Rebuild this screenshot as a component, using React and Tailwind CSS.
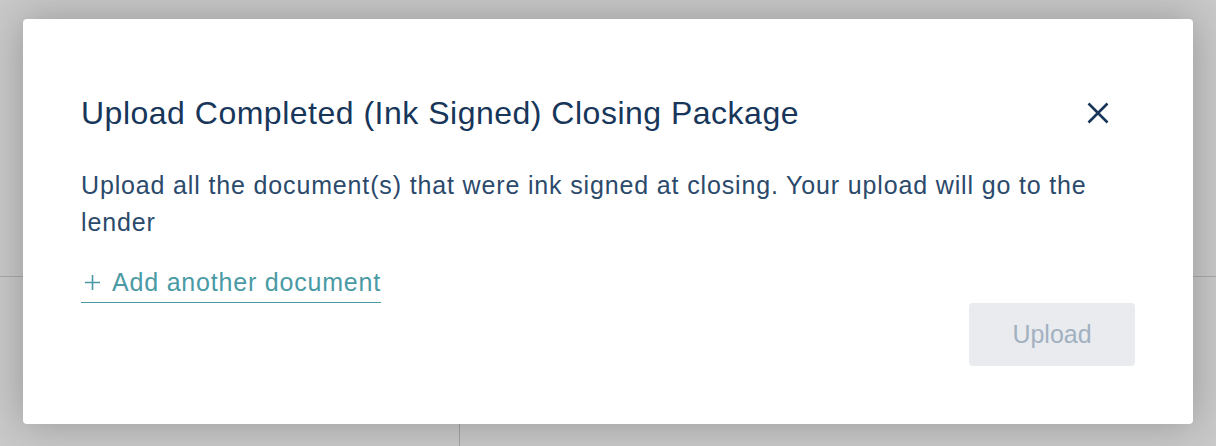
import React from "react";

const font = { fontFamily: '"Liberation Sans", Arial, sans-serif' };

const CloseIcon = () => (
  <svg width="22" height="22" viewBox="0 0 22 22" fill="none" stroke="currentColor" strokeWidth="2.6" strokeLinecap="butt">
    <path d="M1.5 1.5L20.5 20.5M20.5 1.5L1.5 20.5" />
  </svg>
);

const PlusIcon = () => (
  <svg width="15" height="15" viewBox="0 0 15 15" fill="none" stroke="currentColor" strokeWidth="1.6">
    <path d="M7.5 0V15M0 7.5H15" />
  </svg>
);

const App = () => {
  return (
    <div className="relative h-[446px] w-full overflow-hidden bg-[#c9c9c9]" style={font}>
      {/* page behind the overlay */}
      <div className="flex h-full flex-col">
        <div className="h-[277px] border-b border-[#a9a9a9]" />
        <div className="flex flex-1">
          <div className="w-[460px] border-r border-[#a3a3a3]" />
          <div className="flex-1" />
        </div>
      </div>

      {/* modal */}
      <div className="absolute inset-0 flex items-start justify-center px-[23px] pt-[19px]">
        <div className="h-[405px] w-full rounded-[4px] bg-white px-[58px] pt-[76px] shadow-[0_0_40px_rgba(0,0,0,0.25)]">
          <div className="flex items-center justify-between">
            <h2 className="text-[32px] leading-[36px] tracking-[0.5px] text-[#17365a]">
              Upload Completed (Ink Signed) Closing Package
            </h2>
            <button className="mr-[26px] text-[#17365a]">
              <CloseIcon />
            </button>
          </div>
          <p className="mt-[36px] text-[25px] leading-[37px] tracking-[0.85px] text-[#2b4a6b]">
            Upload all the document(s) that were ink signed at closing. Your upload will go to the lender
          </p>
          <div className="mt-[26px] flex items-start justify-between">
            <button className="flex items-center border-b border-[#4a9aa5] pb-[5px] text-[25px] leading-[30px] tracking-[0.8px] text-[#4a9aa5]">
              <span className="ml-[4px] mr-[12px] mt-[1px]">
                <PlusIcon />
              </span>
              <span>Add another document</span>
            </button>
            <button className="mt-[36px] h-[63px] w-[166px] rounded-[4px] bg-[#e9ebef] text-[25px] text-[#a2b1c0]">
              Upload
            </button>
          </div>
        </div>
      </div>
    </div>
  );
};

export default App;
